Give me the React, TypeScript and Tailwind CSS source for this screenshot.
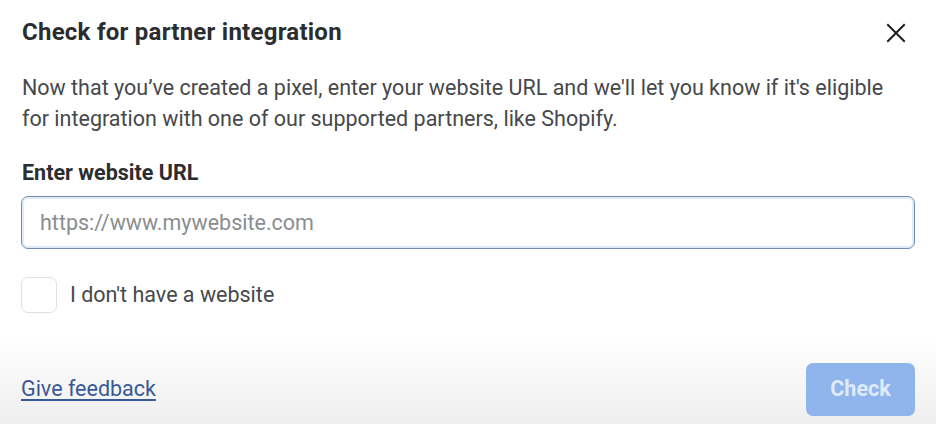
import React from 'react'

const CloseIcon = () => (
  <svg width="20" height="20" viewBox="0 0 20 20" fill="none" stroke="#1c1e21" strokeWidth="2" strokeLinecap="square">
    <path d="M2 2L18 18M18 2L2 18" />
  </svg>
)

export default function App() {
  return (
    <div className="w-[936px] h-[424px] bg-white flex flex-col font-['Roboto',sans-serif] overflow-hidden">
      <div className="flex flex-col px-[21px]">
        <div className="flex items-center justify-between h-[28px] mt-[18px]">
          <h1 className="text-[24px] leading-[28px] font-bold tracking-[0.25px] text-[#2b2d30] pl-px">Check for partner integration</h1>
          <button className="mr-[9px] mt-px">
            <CloseIcon />
          </button>
        </div>

        <p className="mt-[26px] text-[21.5px] leading-[31px] text-[#46484c] pl-px">
          Now that you’ve created a pixel, enter your website URL and we'll let you know if it's eligible
          <br />
          for integration with one of our supported partners, like Shopify.
        </p>

        <label className="mt-[27px] text-[21.5px] leading-[24px] font-bold text-[#2b2d30] pl-px">Enter website URL</label>

        <input
          type="text"
          placeholder="https://www.mywebsite.com"
          className="mt-[11px] h-[53px] w-full rounded-[7px] border border-[#6f8db3] shadow-[inset_0_0_0_2px_#e2ebf8] px-[18px] text-[21.5px] text-[#46484c] placeholder:text-[#8a8d91] outline-none"
        />

        <div className="mt-[28px] flex items-center gap-[13px]">
          <div className="w-[36px] h-[36px] rounded-[7px] border border-[#dfe1e5] bg-white" />
          <span className="text-[21.5px] text-[#46484c]">I don't have a website</span>
        </div>
      </div>

      <div className="mt-auto flex items-center justify-between px-[21px] pt-[30px] pb-[8px] bg-gradient-to-b from-white to-[#efefef]">
        <a href="#" className="text-[21.5px] text-[#385898] underline underline-offset-[3px] decoration-[1.5px]">Give feedback</a>
        <button className="w-[109px] h-[53px] rounded-[7px] bg-[#8fb5ec] text-[21.5px] font-bold text-[#dfeafb]">Check</button>
      </div>
    </div>
  )
}
